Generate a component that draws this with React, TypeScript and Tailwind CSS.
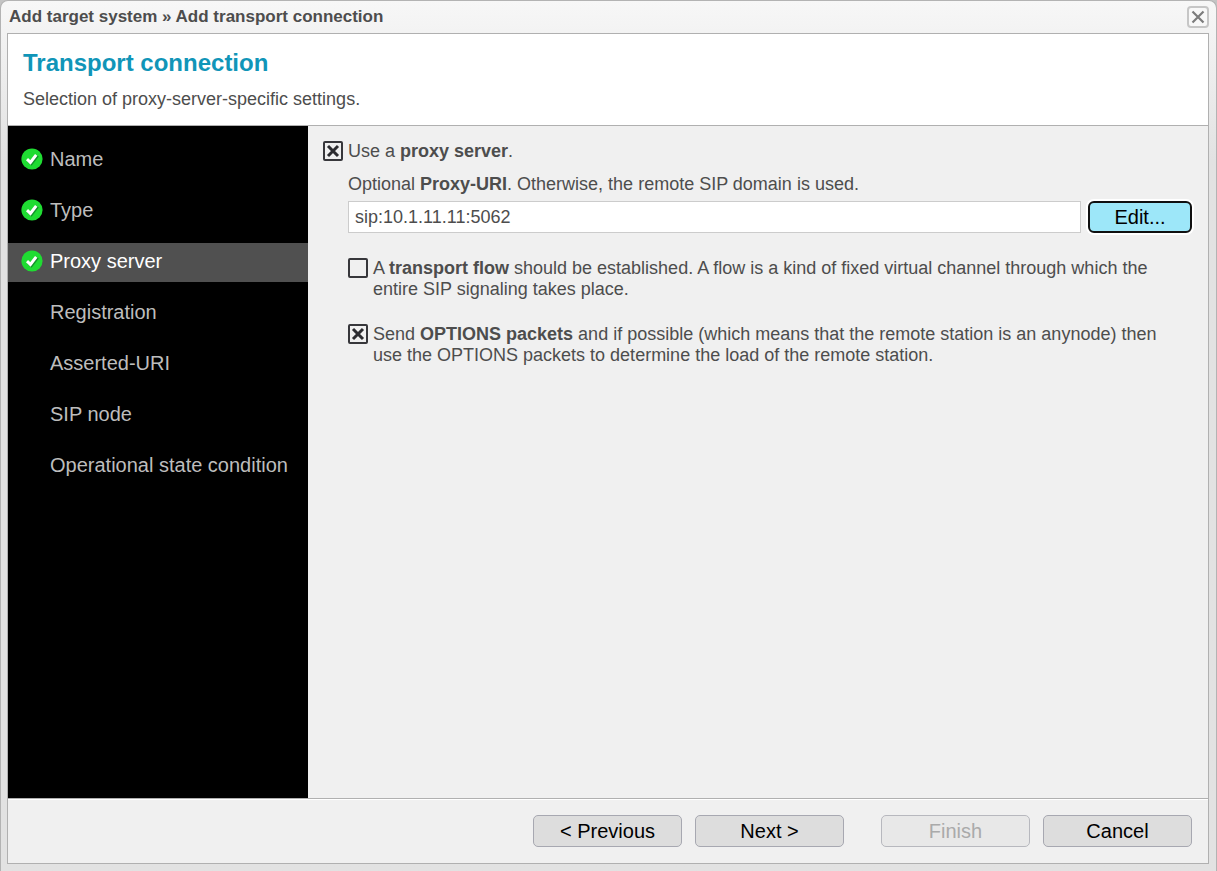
import { useState, type ReactNode } from 'react';
import clsx from 'clsx';

const steps = [
  { label: 'Name', done: true },
  { label: 'Type', done: true },
  { label: 'Proxy server', done: true, active: true },
  { label: 'Registration' },
  { label: 'Asserted-URI' },
  { label: 'SIP node' },
  { label: 'Operational state condition' }
];

function DoneIcon() {
  return (
    <svg viewBox="0 0 22 22" className="h-[22px] w-[22px]" aria-hidden="true">
      <circle cx="11" cy="11" r="10.6" fill="#1fdc32" />
      <path d="M7 12.4 L10.4 15.6 L16.6 7.6" fill="none" stroke="#12922a" strokeWidth="3" />
      <path d="M6 11.2 L9.4 14.4 L15.2 6.8" fill="none" stroke="#fff" strokeWidth="3" />
    </svg>
  );
}

interface CheckFieldProps {
  id: string;
  defaultChecked?: boolean;
  children: ReactNode;
}

function CheckField({ id, defaultChecked = false, children }: CheckFieldProps) {
  const [checked, setChecked] = useState(defaultChecked);

  return (
    <div className="flex items-start gap-[5px]">
      <span className="relative h-5 w-5 shrink-0">
        <input
          id={id}
          type="checkbox"
          checked={checked}
          onChange={(e) => setChecked(e.target.checked)}
          className="block h-5 w-5 appearance-none rounded-xs border-2 border-[#37373b] bg-[#f0f0f0]"
        />
        {checked && (
          <svg viewBox="0 0 20 20" className="pointer-events-none absolute inset-0 h-5 w-5" aria-hidden="true">
            <path d="M5 5 L15 15 M15 5 L5 15" stroke="#2c2c30" strokeWidth="3" />
          </svg>
        )}
      </span>
      <label htmlFor={id} className="min-w-0">
        {children}
      </label>
    </div>
  );
}

interface WizardButtonProps {
  children: ReactNode;
  disabled?: boolean;
}

function WizardButton({ children, disabled }: WizardButtonProps) {
  return (
    <button
      type="button"
      disabled={disabled}
      className="h-8 w-[149px] rounded-[5px] border border-[#a7a8b1] bg-[#dddddd] text-xl leading-6 text-black disabled:border-[#b7b8be] disabled:bg-[#e8e8e8] disabled:text-[#aaaaaa]"
    >
      {children}
    </button>
  );
}

export default function App() {
  const [uri, setUri] = useState('sip:10.1.11.11:5062');

  return (
    <div className="bg-[#c4c4c4] font-['Liberation_Sans',Arial,sans-serif] text-[#4d4d4d]">
      <div className="flex min-h-screen flex-col rounded-t-lg border-x border-t border-[#b3b3b3] bg-[#e2e2e2] bg-linear-to-b from-[#f7f7f7] to-[#e2e2e2] to-[160px] px-[6px] pb-[7px]">
        {/* Title bar */}
        <div className="flex h-8 items-center justify-between">
          <h1 className="pl-[2px] text-[17px] leading-5 font-bold">
            Add target system » Add transport connection
          </h1>
          <button
            type="button"
            aria-label="Close"
            className="mr-[1px] flex h-[22px] w-[22px] items-center justify-center rounded-[4px] border-2 border-[#c6c6c6] bg-[#f8f8f8]"
          >
            <svg viewBox="0 0 14 14" className="h-[14px] w-[14px]" aria-hidden="true">
              <path d="M1.5 1.5 L12.5 12.5 M12.5 1.5 L1.5 12.5" stroke="#7c7c7c" strokeWidth="2.2" />
            </svg>
          </button>
        </div>

        <div className="mr-[1px] flex grow flex-col border border-[#b0b0b0] bg-[#f0f0f0]">
          <header className="border-b border-[#b0b0b0] bg-white px-[15px] py-[15px]">
            <h2 className="text-2xl leading-7 font-bold text-[#1095b8]">Transport connection</h2>
            <p className="mt-3 text-lg leading-[21px]">Selection of proxy-server-specific settings.</p>
          </header>

          <div className="flex grow">
            <nav className="w-[300px] shrink-0 bg-black pt-[15px]">
              <ul className="flex flex-col gap-3">
                {steps.map((step) => (
                  <li
                    key={step.label}
                    aria-current={step.active ? 'step' : undefined}
                    className={clsx(
                      'flex h-[39px] items-center gap-[7px] pb-[3px] pl-[13px] text-xl',
                      step.active ? 'bg-[#505050] text-white' : 'text-[#bdbdbd]'
                    )}
                  >
                    <span className="w-[22px]">{step.done && <DoneIcon />}</span>
                    {step.label}
                  </li>
                ))}
              </ul>
            </nav>

            <main className="min-w-0 grow pt-[15px] pr-4 pl-[15px] text-lg leading-[21px]">
              <CheckField id="use-proxy" defaultChecked>
                Use a <b>proxy server</b>.
              </CheckField>

              <div className="mt-3 pl-[25px]">
                <label htmlFor="proxy-uri">
                  Optional <b>Proxy-URI</b>. Otherwise, the remote SIP domain is used.
                </label>
                <div className="mt-[6px] mb-[25px] flex gap-[7px]">
                  <input
                    id="proxy-uri"
                    type="text"
                    value={uri}
                    onChange={(e) => setUri(e.target.value)}
                    className="h-8 min-w-0 grow border border-[#cccccc] bg-white px-[6px]"
                  />
                  <button
                    type="button"
                    className="h-8 w-[104px] shrink-0 rounded-[6px] border-2 border-[#101010] bg-[#9de7f9] text-xl leading-6 text-black ring-2 ring-white"
                  >
                    Edit...
                  </button>
                </div>

                <div className="flex flex-col gap-6 pr-6">
                  <CheckField id="transport-flow">
                    A <b>transport flow</b> should be established. A flow is a kind of fixed virtual channel through which the entire SIP signaling takes place.
                  </CheckField>
                  <CheckField id="options-packets" defaultChecked>
                    Send <b>OPTIONS packets</b> and if possible (which means that the remote station is an anynode) then use the OPTIONS packets to determine the load of the remote station.
                  </CheckField>
                </div>
              </div>
            </main>
          </div>

          <footer className="border-t border-[#b0b0b0]">
            <div className="flex justify-end gap-[13px] border-t border-white px-4 pt-[15px] pb-4">
              <WizardButton>&lt; Previous</WizardButton>
              <WizardButton>Next &gt;</WizardButton>
              <div className="ml-6 flex gap-[13px]">
                <WizardButton disabled>Finish</WizardButton>
                <WizardButton>Cancel</WizardButton>
              </div>
            </div>
          </footer>
        </div>
      </div>
    </div>
  );
}
